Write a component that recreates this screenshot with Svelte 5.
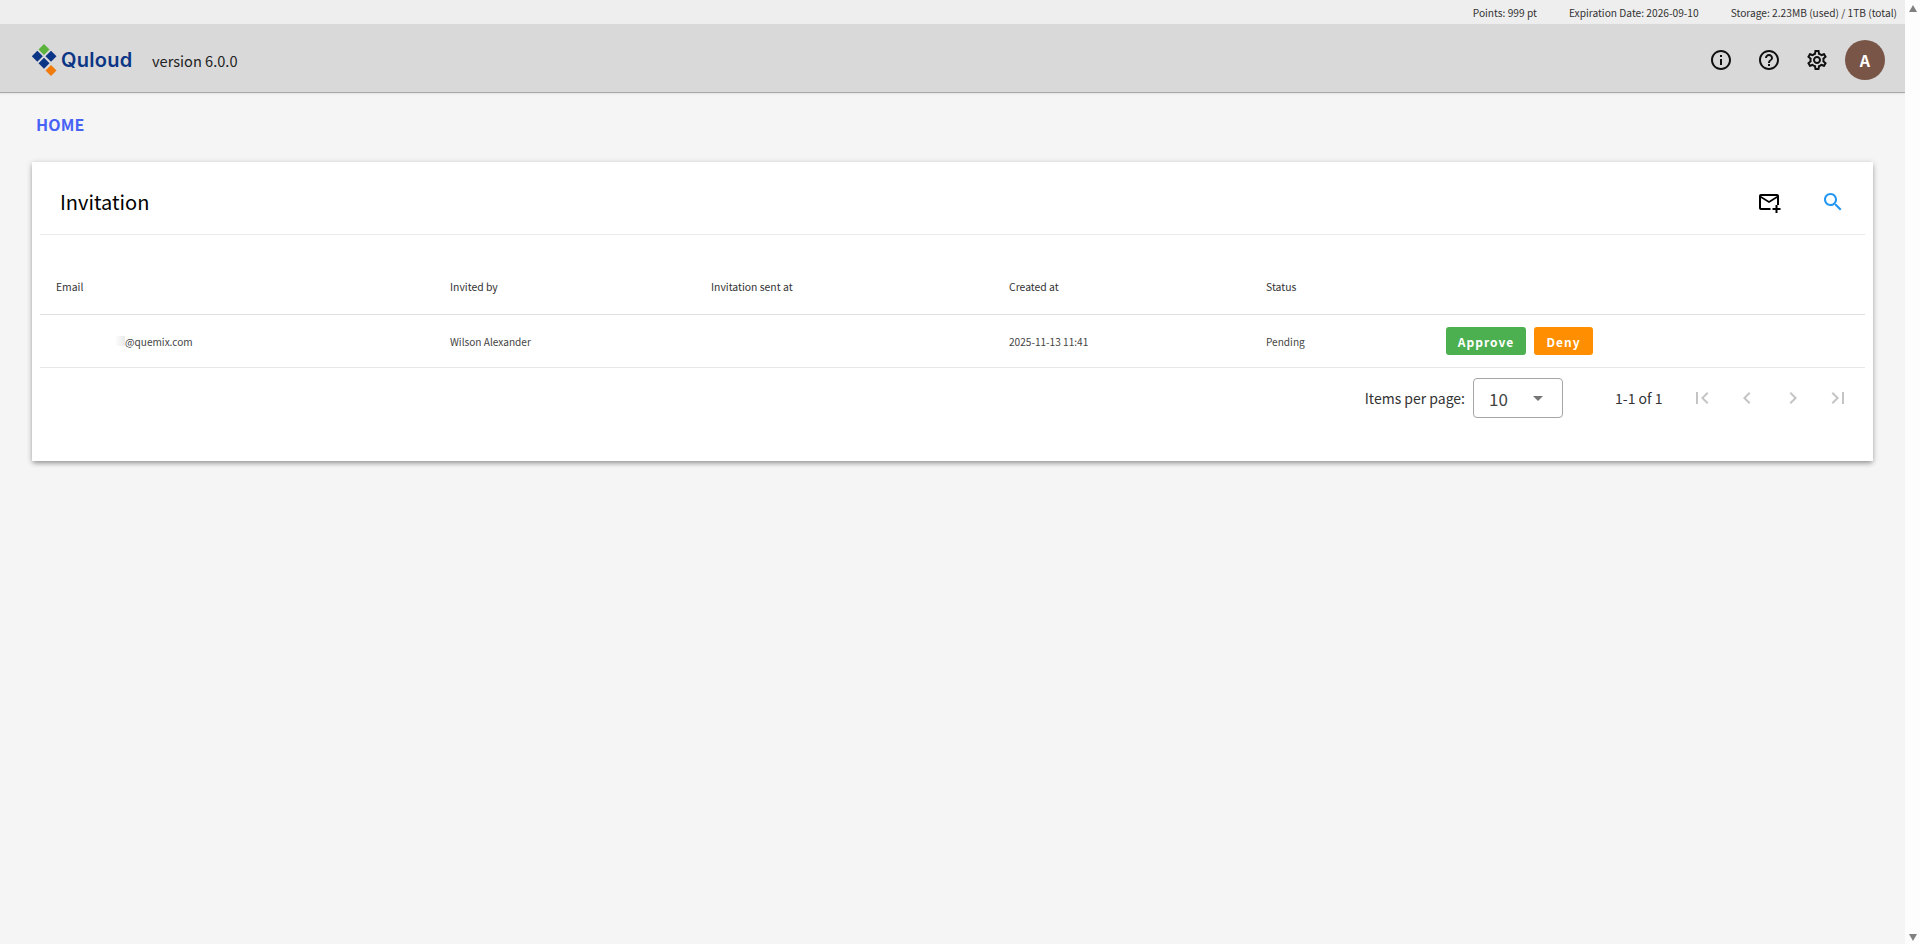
<script>
  const columns = [
    { label: 'Email', width: 394 },
    { label: 'Invited by', width: 261 },
    { label: 'Invitation sent at', width: 298 },
    { label: 'Created at', width: 257 },
    { label: 'Status', width: 180 }
  ];
  const gridTemplate = columns.map((c) => c.width + 'px').join(' ') + ' 1fr';
</script>

<div class="shell">
  <div class="page">
    <div class="statusbar">
      <span>Points: 999 pt</span>
      <span>Expiration Date: 2026-09-10</span>
      <span>Storage: 2.23MB (used) / 1TB (total)</span>
    </div>

    <header class="appbar">
      <div class="brand">
        <svg class="mark" viewBox="0 0 26 32" width="26" height="32" aria-hidden="true">
          <path d="M12 0 L17.500 5.500 L12 11 L6.500 5.500 Z" fill="#5bb33c" />
          <path d="M5.300 6.800 L10.800 12.300 L5.300 17.800 L-0.200 12.300 Z" fill="#0b3585" />
          <path d="M19 6.800 L24.500 12.300 L19 17.800 L13.500 12.300 Z" fill="#0b3585" />
          <path d="M12 13.800 L17.500 19.300 L12 24.800 L6.500 19.300 Z" fill="#0b3585" />
          <path d="M19 21 L24.500 26.500 L19 32 L13.500 26.500 Z" fill="#f07a0a" />
        </svg>
        <span class="wordmark">Quloud</span>
      </div>
      <span class="version">version 6.0.0</span>
      <div class="spacer"></div>
      <div class="actions">
        <button class="iconbtn" aria-label="Info">
          <svg viewBox="0 0 24 24" width="24" height="24"><path d="M11 7h2v2h-2zm0 4h2v6h-2zm1-9C6.480 2 2 6.480 2 12s4.480 10 10 10 10-4.480 10-10S17.520 2 12 2zm0 18c-4.410 0-8-3.590-8-8s3.590-8 8-8 8 3.590 8 8-3.590 8-8 8z" /></svg>
        </button>
        <button class="iconbtn" aria-label="Help">
          <svg viewBox="0 0 24 24" width="24" height="24"><path d="M11 18h2v-2h-2v2zm1-16C6.480 2 2 6.480 2 12s4.480 10 10 10 10-4.480 10-10S17.520 2 12 2zm0 18c-4.410 0-8-3.590-8-8s3.590-8 8-8 8 3.590 8 8-3.590 8-8 8zm0-14c-2.210 0-4 1.790-4 4h2c0-1.100.9-2 2-2s2 .9 2 2c0 2-3 1.750-3 5h2c0-2.250 3-2.500 3-5 0-2.210-1.790-4-4-4z" /></svg>
        </button>
        <button class="iconbtn" aria-label="Settings">
          <svg viewBox="0 0 24 24" width="24" height="24"><path d="M19.43 12.98c.04-.32.07-.64.07-.98 0-.34-.03-.66-.07-.98l2.11-1.65c.19-.15.24-.42.12-.64l-2-3.46c-.09-.16-.26-.25-.44-.25-.06 0-.12.01-.17.03l-2.49 1c-.52-.4-1.08-.73-1.69-.98l-.38-2.65C14.46 2.18 14.25 2 14 2h-4c-.25 0-.46.18-.49.42l-.38 2.65c-.61.25-1.17.59-1.69.98l-2.49-1c-.06-.02-.12-.03-.18-.03-.17 0-.34.09-.43.25l-2 3.46c-.13.22-.07.49.12.64l2.11 1.65c-.04.32-.07.65-.07.98 0 .33.03.66.07.98l-2.11 1.65c-.19.15-.24.42-.12.64l2 3.46c.09.16.26.25.44.25.06 0 .12-.01.17-.03l2.49-1c.52.4 1.08.73 1.69.98l.38 2.65c.03.24.24.42.49.42h4c.25 0 .46-.18.49-.42l.38-2.65c.61-.25 1.17-.59 1.69-.98l2.49 1c.06.02.12.03.18.03.17 0 .34-.09.43-.25l2-3.46c.12-.22.07-.49-.12-.64l-2.11-1.65zm-1.98-1.71c.04.31.05.52.05.73 0 .21-.02.43-.05.73l-.14 1.13.89.7 1.08.84-.7 1.21-1.27-.51-1.04-.42-.9.68c-.43.32-.84.56-1.25.73l-1.06.43-.16 1.13-.2 1.35h-1.4l-.19-1.35-.16-1.13-1.06-.43c-.43-.18-.83-.41-1.23-.71l-.91-.7-1.06.43-1.27.51-.7-1.21 1.08-.84.89-.7-.14-1.13c-.03-.31-.05-.54-.05-.74s.02-.43.05-.73l.14-1.13-.89-.7-1.08-.84.7-1.21 1.27.51 1.04.42.9-.68c.43-.32.84-.56 1.25-.73l1.06-.43.16-1.13.2-1.35h1.39l.19 1.35.16 1.13 1.06.43c.43.18.83.41 1.23.71l.91.7 1.06-.43 1.27-.51.7 1.21-1.07.85-.89.7.14 1.13zM12 8c-2.21 0-4 1.79-4 4s1.79 4 4 4 4-1.79 4-4-1.79-4-4-4zm0 6c-1.1 0-2-.9-2-2s.9-2 2-2 2 .9 2 2-.9 2-2 2z" /></svg>
        </button>
        <div class="avatar">A</div>
      </div>
    </header>

    <main class="content">
      <div class="crumb">HOME</div>

      <section class="card">
        <div class="cardhead">
          <h1>Invitation</h1>
          <div class="cardtools">
            <button class="iconbtn" aria-label="Invite">
              <svg viewBox="0 0 24 24" width="24" height="24"><path d="M22 15V6c0-1.100-.9-2-2-2H4c-1.100 0-2 .9-2 2v12c0 1.100.9 2 2 2h9.500v-2H4V8l8 5 8-5v7h2zM12 11 4 6h16l-8 5z" /><path d="M20.500 15h-2v3h-3v2h3v3h2v-3h3v-2h-3z" /></svg>
            </button>
            <button class="iconbtn search" aria-label="Search">
              <svg viewBox="0 0 24 24" width="24" height="24"><path d="M15.500 14h-.79l-.28-.27C15.410 12.590 16 11.110 16 9.500 16 5.910 13.090 3 9.500 3S3 5.910 3 9.500 5.910 16 9.500 16c1.610 0 3.090-.59 4.230-1.570l.27.28v.79l5 4.990L20.490 19l-4.990-5zm-6 0C7.010 14 5 11.990 5 9.500S7.010 5 9.500 5 14 7.010 14 9.500 11.990 14 9.500 14z" /></svg>
            </button>
          </div>
        </div>

        <div class="table">
          <div class="row headrow" style="grid-template-columns: {gridTemplate}">
            {#each columns as col}
              <div>{col.label}</div>
            {/each}
            <div></div>
          </div>
          <div class="row bodyrow" style="grid-template-columns: {gridTemplate}">
            <div class="email"><span class="smudge"></span>@quemix.com</div>
            <div>Wilson Alexander</div>
            <div></div>
            <div>2025-11-13 11:41</div>
            <div>Pending</div>
            <div class="rowbtns">
              <button class="pill approve">Approve</button>
              <button class="pill deny">Deny</button>
            </div>
          </div>
        </div>

        <div class="paginator">
          <span class="perpage">Items per page:</span>
          <div class="select">
            <span>10</span>
            <i class="caret"></i>
          </div>
          <span class="range">1-1 of 1</span>
          <div class="pagebtns">
            <svg viewBox="0 0 24 24" width="24" height="24"><path d="M18.410 16.590L13.820 12l4.590-4.590L17 6l-6 6 6 6zM6 6h2v12H6z" /></svg>
            <svg viewBox="0 0 24 24" width="24" height="24"><path d="M15.410 7.410L14 6l-6 6 6 6 1.410-1.410L10.830 12z" /></svg>
            <svg viewBox="0 0 24 24" width="24" height="24"><path d="M10 6L8.590 7.410 13.170 12l-4.580 4.590L10 18l6-6z" /></svg>
            <svg viewBox="0 0 24 24" width="24" height="24"><path d="M5.590 7.410L10.180 12l-4.590 4.590L7 18l6-6-6-6zM16 6h2v12h-2z" /></svg>
          </div>
        </div>
      </section>
    </main>
  </div>

  <div class="scrollbar">
    <i class="arrow up"></i>
    <i class="arrow down"></i>
  </div>
</div>

<style>
  :global(body) {
    margin: 0;
    overflow: hidden;
    background: #f5f5f5;
  }

  .shell {
    display: flex;
    height: 944px;
    font-family: "Noto Sans CJK JP", "Noto Sans", sans-serif;
    color: rgba(0, 0, 0, 0.87);
  }

  .page {
    flex: 1;
    min-width: 0;
    display: flex;
    flex-direction: column;
    background: #f5f5f5;
  }

  .scrollbar {
    width: 15px;
    flex: none;
    background: #fdfdfd;
    display: flex;
    flex-direction: column;
    justify-content: space-between;
    align-items: center;
    padding: 5px 0 3px;
    box-sizing: border-box;
  }

  .arrow {
    width: 0;
    height: 0;
    border-left: 4.500px solid transparent;
    border-right: 4.500px solid transparent;
  }
  .arrow.up { border-bottom: 7px solid #808080; }
  .arrow.down { border-top: 7px solid #808080; }

  .statusbar {
    height: 24px;
    flex: none;
    background: #eeeeee;
    display: flex;
    justify-content: flex-end;
    align-items: center;
    gap: 32px;
    padding-right: 8px;
    font-size: 10.2px;
    color: #333;
  }

  .appbar {
    height: 69px;
    flex: none;
    box-sizing: border-box;
    background: #d9d9d9;
    border-bottom: 1px solid #a8a8a8;
    box-shadow: 0 1px 2px rgba(0, 0, 0, 0.08);
    display: flex;
    align-items: center;
    padding: 4px 20px 0 32px;
  }

  .brand {
    display: flex;
    align-items: center;
    width: 120px;
  }

  .mark { flex: none; overflow: visible; }

  .wordmark {
    font-family: Inter, "Liberation Sans", sans-serif;
    font-weight: 600;
    font-size: 20px;
    letter-spacing: 0.3px;
    color: #0b3585;
    margin-left: 3px;
  }

  .version {
    font-size: 14.6px;
    color: #222;
  }

  .spacer { flex: 1; }

  .actions {
    display: flex;
    align-items: center;
  }

  .iconbtn {
    width: 48px;
    height: 40px;
    padding: 0;
    border: 0;
    background: none;
    display: flex;
    align-items: center;
    justify-content: center;
    color: #111;
  }
  .iconbtn svg { fill: currentColor; }

  .avatar {
    width: 40px;
    height: 40px;
    margin-left: 4px;
    border-radius: 50%;
    background: #795548;
    color: #fff;
    font-size: 16px;
    font-weight: 700;
    display: flex;
    align-items: center;
    justify-content: center;
  }

  .content {
    padding: 0 32px;
  }

  .crumb {
    height: 69px;
    display: flex;
    align-items: center;
    padding: 0 0 7px 4px;
    font-size: 16px;
    font-weight: 700;
    letter-spacing: 0.1px;
    color: #4763f5;
    box-sizing: border-box;
  }

  .card {
    background: #fff;
    height: 299px;
    padding: 0 8px;
    box-sizing: border-box;
    box-shadow: 0 3px 5px -1px rgba(0, 0, 0, 0.3), 0 1px 6px rgba(0, 0, 0, 0.18);
  }

  .cardhead {
    height: 73px;
    box-sizing: border-box;
    border-bottom: 1px solid #eaeaea;
    display: flex;
    align-items: center;
    justify-content: space-between;
    padding: 7px 8px 0 20px;
  }

  h1 {
    margin: 0;
    font-size: 20px;
    font-weight: 400;
    color: #000;
  }

  .cardtools {
    display: flex;
    align-items: center;
    gap: 16px;
    color: #000;
  }
  .cardtools .iconbtn { color: #000; }
  .cardtools .search { color: #2196f3; }

  .row {
    display: grid;
    align-items: center;
    padding-left: 16px;
  }

  .headrow {
    height: 80px;
    box-sizing: border-box;
    border-bottom: 1px solid #dfdfdf;
    padding-top: 23px;
    font-size: 10.4px;
    color: #333;
  }

  .bodyrow {
    height: 53px;
    box-sizing: border-box;
    border-bottom: 1px solid #e8e8e8;
    font-size: 10.1px;
    color: #444;
  }

  .email {
    display: flex;
    align-items: center;
  }

  .smudge {
    width: 69px;
    height: 10px;
    flex: none;
    background: linear-gradient(90deg, #fff 85%, #e9e9e9 100%);
  }

  .rowbtns {
    display: flex;
    gap: 8px;
  }

  .pill {
    height: 28px;
    border: 0;
    border-radius: 3px;
    color: #fff;
    font-family: inherit;
    font-size: 12px;
    font-weight: 700;
    letter-spacing: 1px;
    padding: 0;
  }
  .approve { width: 80px; background: #4caf50; }
  .deny { width: 59px; background: #ff8f00; }

  .paginator {
    display: flex;
    align-items: center;
    justify-content: flex-end;
    height: 60px;
    padding-right: 15px;
    font-size: 14px;
    color: #333;
  }

  .perpage { margin-right: 8px; }

  .select {
    width: 90px;
    height: 40px;
    box-sizing: border-box;
    border: 1px solid #a5a5a5;
    border-radius: 4px;
    display: flex;
    align-items: center;
    justify-content: space-between;
    padding: 0 19px 0 15px;
    font-size: 17px;
    color: #444;
  }

  .caret {
    width: 0;
    height: 0;
    border-left: 5px solid transparent;
    border-right: 5px solid transparent;
    border-top: 5px solid #757575;
  }

  .range { margin: 0 27px 0 52px; }

  .pagebtns {
    display: flex;
    gap: 21.500px;
  }
  .pagebtns svg { fill: #c4c4c4; }
</style>
